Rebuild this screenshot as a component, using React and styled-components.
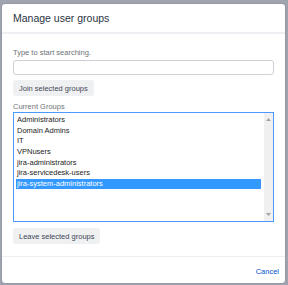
import React from "react";
import styled, { createGlobalStyle } from "styled-components";

const GlobalStyle = createGlobalStyle`
  html, body {
    margin: 0;
    padding: 0;
    background: #9fa4af;
    font-family: "Liberation Sans", Arial, sans-serif;
  }
  * { box-sizing: border-box; }
`;

// grey backdrop behind the modal
const Backdrop = styled.div`
  width: 288px;
  height: 285px;
  padding: 4px 3px 2px 2px;
  overflow: hidden;
`;

const Dialog = styled.div`
  width: 283px;
  background: #fff;
  border-radius: 3px;
  display: flex;
  flex-direction: column;
  box-shadow: 0 0 2px rgba(9, 30, 66, 0.25);
`;

const Header = styled.div`
  height: 30px;
  padding: 0 11px;
  display: flex;
  align-items: center;
  border-bottom: 2px solid #eeeff2;
`;

const Title = styled.h1`
  margin: 0;
  font-size: 10.5px;
  font-weight: 400;
  color: #2a3342;
`;

const Body = styled.div`
  display: flex;
  flex-direction: column;
  align-items: flex-start;
  padding: 14px 11px 12px 11px;
`;

const Label = styled.label`
  font-size: 7.5px;
  line-height: 10px;
  color: #6e7379;
  margin-top: ${(p) => p.$top || 0}px;
  margin-bottom: ${(p) => p.$bottom || 0}px;
`;

const Input = styled.input`
  width: 100%;
  height: 15px;
  border: 1px solid #cdd1d7;
  border-radius: 3px;
  background: #fff;
  padding: 0 4px;
  font: inherit;
  font-size: 7.5px;
  outline: none;
`;

const Button = styled.button`
  height: 16px;
  margin-top: ${(p) => p.$top}px;
  padding: 0 6px;
  border: none;
  border-radius: 3px;
  background: #eff0f2;
  color: #3f4654;
  font-family: "Liberation Sans", Arial, sans-serif;
  font-size: 7.5px;
  cursor: pointer;
`;

const ListBox = styled.div`
  width: 100%;
  height: 110px;
  border: 1px solid #4c9aff;
  display: flex;
`;

const Options = styled.div`
  flex: 1;
  padding: 2.4px 3px 0 2px;
`;

const Option = styled.div`
  height: 10.55px;
  line-height: 10.55px;
  padding-left: 1px;
  font-size: 7.5px;
  color: ${(p) => (p.$selected ? "#fff" : "#1d1d1d")};
  background: ${(p) => (p.$selected ? "#3399ff" : "transparent")};
  white-space: nowrap;
`;

const ScrollBar = styled.div`
  width: 9px;
  background: #f0f0f0;
  display: flex;
  flex-direction: column;
  justify-content: space-between;
  align-items: center;
  padding: 5px 0 5px;
`;

const Footer = styled.div`
  height: 27px;
  border-top: 1px solid #eeeff2;
  display: flex;
  justify-content: flex-end;
  align-items: center;
  padding: 3px 6px 0 0;
`;

const CancelLink = styled.a`
  font-size: 7.5px;
  color: #0052cc;
  text-decoration: none;
  cursor: pointer;
`;

const Arrow = ({ down }) => (
  <svg width="5" height="3" viewBox="0 0 5 3">
    <path d={down ? "M0 0 L5 0 L2.5 3 Z" : "M0 3 L5 3 L2.5 0 Z"} fill="#a3a3a3" />
  </svg>
);

const groups = [
  "Administrators",
  "Domain Admins",
  "IT",
  "VPNusers",
  "jira-administrators",
  "jira-servicedesk-users",
  "jira-system-administrators",
];

export default function App() {
  const [selected, setSelected] = React.useState("jira-system-administrators");

  return (
    <>
      <GlobalStyle />
      <Backdrop>
        <Dialog>
          <Header>
            <Title>Manage user groups</Title>
          </Header>
          <Body>
            <Label $bottom={2}>Type to start searching.</Label>
            <Input type="text" />
            <Button $top={5}>Join selected groups</Button>
            <Label $top={6}>Current Groups</Label>
            <ListBox>
              <Options>
                {groups.map((g) => (
                  <Option key={g} $selected={g === selected} onClick={() => setSelected(g)}>
                    {g}
                  </Option>
                ))}
              </Options>
              <ScrollBar>
                <Arrow />
                <Arrow down />
              </ScrollBar>
            </ListBox>
            <Button $top={6}>Leave selected groups</Button>
          </Body>
          <Footer>
            <CancelLink>Cancel</CancelLink>
          </Footer>
        </Dialog>
      </Backdrop>
    </>
  );
}
